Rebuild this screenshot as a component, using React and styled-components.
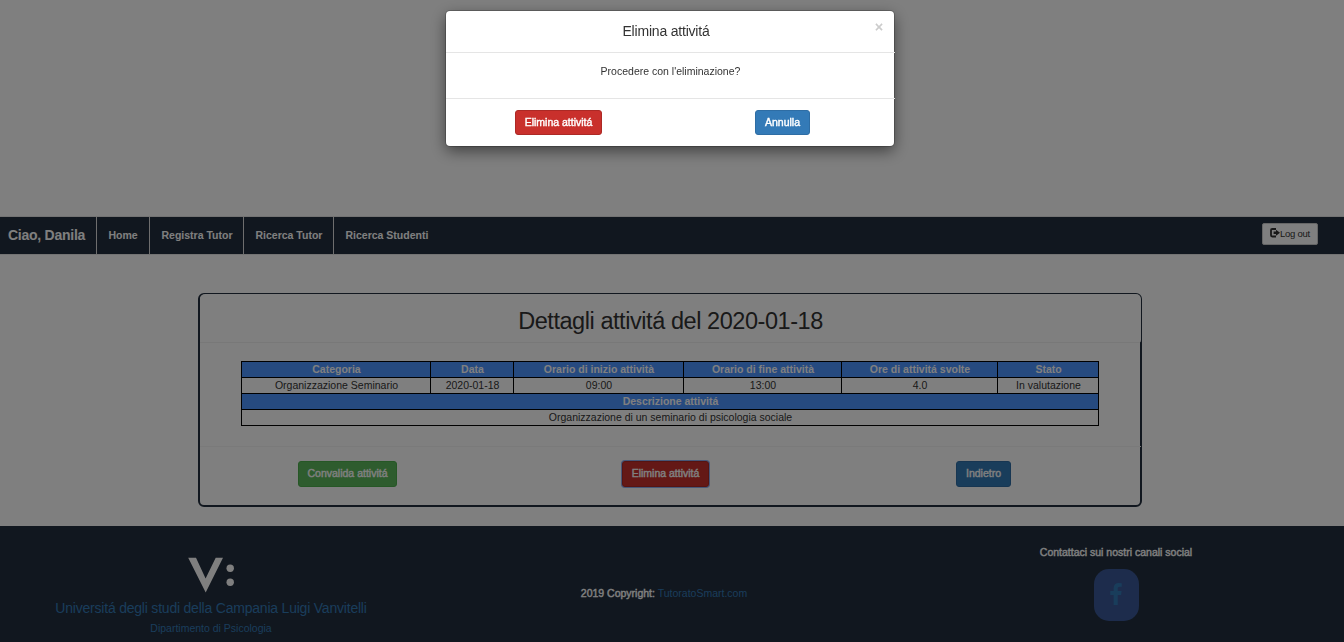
import React from 'react';
import styled, { createGlobalStyle } from 'styled-components';

const GlobalStyle = createGlobalStyle`
  * { box-sizing: border-box; }
  body {
    margin: 0;
    background: #fff;
    color: #333;
    font: 10.5px/16px "Liberation Sans", Arial, sans-serif;
    overflow: hidden;
  }
`;

const Page = styled.div`
  display: flex;
  flex-direction: column;
  width: 1344px;
  height: 642px;
  padding-top: 216px;
  overflow: hidden;
`;

const Strong = styled.span`
  -webkit-text-stroke: 0.4px currentColor;
  white-space: nowrap;
`;

const Navbar = styled.nav`
  display: flex;
  height: 39px;
  flex: none;
  border: 1px solid #e7e7e7;
  border-width: 1px 0;
  background: #232f3e;
  color: #fff;
  font-weight: bold;
`;

const NavItem = styled.div`
  width: ${p => p.$width}px;
  height: 37px;
  line-height: 36px;
  padding-left: ${p => (p.$brand ? 8 : 11.5)}px;
  font-size: ${p => (p.$brand ? 14 : 10.5)}px;
  letter-spacing: ${p => (p.$brand ? '-0.25px' : 'normal')};
  white-space: nowrap;
  border-right: ${p => (p.$last ? 0 : 1)}px solid #ddd;
`;

const Logout = styled.button`
  display: flex;
  align-items: center;
  width: 56px;
  height: 22px;
  margin: 6px 26px 0 auto;
  padding: 0 0 2px 7px;
  border: 1px solid #ccc;
  border-radius: 2px;
  background: #fff;
  color: #333;
  font: 9.5px "Liberation Sans", Arial, sans-serif;
  letter-spacing: -0.25px;
  white-space: nowrap;
`;

const Card = styled.section`
  display: flex;
  flex-direction: column;
  flex: none;
  width: 944px;
  height: 214px;
  margin: 38px 0 0 198px;
  border: 2px solid #232f3e;
  border-radius: 6px;
`;

const CardHeader = styled.h2`
  flex: none;
  height: 49px;
  margin: -1px -1px 0 0;
  padding-right: 0;
  border-bottom: 1px solid #f0f0f0;
  border-radius: 5px 5px 3px 0;
  background: #fff;
  font-size: 23.5px;
  font-weight: normal;
  letter-spacing: -0.44px;
  line-height: 54px;
  text-align: center;
`;

const Table = styled.table`
  width: 858px;
  margin: 18px 0 0 41px;
  table-layout: fixed;
  border-collapse: collapse;
  text-align: center;
`;

const Row = styled.tr`
  height: 16px;
`;

const HeadCell = styled.th`
  padding: 0 0 0 1px;
  border: 1px solid #000;
  background: #4d94ff;
  color: #fff;
  line-height: 15px;
`;

const Cell = styled.td`
  padding: 0 0 0 1px;
  border: 1px solid #000;
  line-height: 15px;
`;

const CardFooter = styled.div`
  display: grid;
  grid-template-columns: 324px 334px auto;
  margin: 20px -1px 0 0;
  padding: 14px 0 0 98px;
  border-top: 1px solid #f5f5f5;
`;

const tones = {
  success: ['#5cb85c', '#4cae4c'],
  danger: ['#c9302c', '#ac2925'],
  primary: ['#337ab7', '#2e6da4'],
};

const Button = styled.button`
  width: ${p => p.$width}px;
  height: ${p => p.$height || 26}px;
  padding: 0 0 ${p => (p.$height ? 1 : 2)}px;
  border: 1px solid ${p => tones[p.$tone][1]};
  border-radius: 3px;
  background: ${p => tones[p.$tone][0]};
  color: #fff;
  font: 10.5px/16px "Liberation Sans", Arial, sans-serif;
  white-space: nowrap;
  box-shadow: ${p => (p.$focused ? '0 0 0 1px #8fadee' : 'none')};
`;

const Footer = styled.footer`
  display: grid;
  grid-template-columns: 422px 484px 1fr;
  flex: 1;
  margin-top: 19px;
  background: #232f3e;
  color: #fff;
  text-align: center;
`;

const University = styled.div`
  display: flex;
  flex-direction: column;
  align-items: center;
  color: #337ab7;
`;

const Mark = styled.svg`
  width: 48px;
  height: 36px;
  margin-top: 31px;
`;

const UniversityName = styled.div`
  margin-top: 6px;
  font-size: 14px;
  letter-spacing: -0.21px;
  line-height: 18px;
`;

const Department = styled.div`
  margin-top: 3px;
`;

const Copyright = styled.div`
  margin-top: 59px;
`;

const Link = styled.a`
  color: #337ab7;
`;

const Social = styled.div`
  display: flex;
  flex-direction: column;
  align-items: center;
  width: 420px;
  padding-top: 18px;
`;

const SocialButton = styled.a`
  display: flex;
  align-items: center;
  justify-content: center;
  width: 45px;
  height: 52px;
  margin-top: 9px;
  padding-bottom: 3px;
  border-radius: 15px;
  background: #3b5998;
  color: #337ab7;
`;

const Backdrop = styled.div`
  position: fixed;
  inset: 0;
  padding: 11px 0 0 446px;
  background: rgba(0, 0, 0, 0.5);
`;

const Modal = styled.div`
  width: 448px;
  height: 135px;
  border-radius: 4px;
  background: #fff;
  box-shadow: 0 0 0 1px rgba(0, 0, 0, 0.2), 0 5px 15px rgba(0, 0, 0, 0.5);
`;

const ModalHeader = styled.div`
  display: grid;
  grid-template-columns: 30px 1fr 31px;
  height: 42px;
  margin-right: -1px;
  border-bottom: 1px solid #e5e5e5;
  text-align: center;
  font-size: 14px;
  line-height: 40px;
`;

const Title = styled.span`
  grid-column: 2;
  margin-right: 8px;
  letter-spacing: -0.2px;
`;

const Close = styled.span`
  padding-right: 1px;
  color: #ccc;
  font-size: 14.5px;
  font-weight: bold;
  line-height: 32px;
`;

const ModalBody = styled.div`
  height: 46px;
  margin-right: -1px;
  padding-top: 10px;
  border-bottom: 1px solid #e5e5e5;
  text-align: center;
`;

const ModalFooter = styled.div`
  display: flex;
  justify-content: space-between;
  padding: 11px 84px 0 69px;
`;

const LogoutIcon = () => (
  <svg width="10" height="10" viewBox="0 0 10 10">
    <path d="M6 1H2.2Q1 1 1 2.2V7.3Q1 8.5 2.2 8.5H6" fill="none" stroke="#333" strokeWidth="1.8" />
    <path d="M3.6 3.6H6V1.8L10 4.8 6 7.8V6H3.6Z" fill="#333" />
  </svg>
);

const FacebookIcon = () => (
  <svg width="12" height="22" viewBox="479 0 864 1664" fill="currentColor">
    <path d="M1343 12v264h-157q-86 0-116 36t-30 108v189h293l-39 296h-254v759h-306v-759h-255v-296h255v-218q0-186 104-288.5t277-102.5q147 0 228 12z" />
  </svg>
);

export default function App() {
  return (
    <>
      <GlobalStyle />
      <Page>
        <Navbar>
          <NavItem $width={97} $brand>Ciao, Danila</NavItem>
          <NavItem $width={53}>Home</NavItem>
          <NavItem $width={94}>Registra Tutor</NavItem>
          <NavItem $width={90}>Ricerca Tutor</NavItem>
          <NavItem $width={120} $last>Ricerca Studenti</NavItem>
          <Logout><LogoutIcon />Log out</Logout>
        </Navbar>
        <Card>
          <CardHeader>Dettagli attivitá del 2020-01-18</CardHeader>
          <Table>
            <colgroup>
              {[189, 83, 170, 158, 156, 101].map((w, i) => <col key={i} width={w} />)}
            </colgroup>
            <tbody>
              <Row>
                <HeadCell>Categoria</HeadCell>
                <HeadCell>Data</HeadCell>
                <HeadCell>Orario di inizio attività</HeadCell>
                <HeadCell>Orario di fine attività</HeadCell>
                <HeadCell>Ore di attivitá svolte</HeadCell>
                <HeadCell>Stato</HeadCell>
              </Row>
              <Row>
                <Cell>Organizzazione Seminario</Cell>
                <Cell>2020-01-18</Cell>
                <Cell>09:00</Cell>
                <Cell>13:00</Cell>
                <Cell>4.0</Cell>
                <Cell>In valutazione</Cell>
              </Row>
              <Row><HeadCell colSpan={6}>Descrizione attivitá</HeadCell></Row>
              <Row><Cell colSpan={6}>Organizzazione di un seminario di psicologia sociale</Cell></Row>
            </tbody>
          </Table>
          <CardFooter>
            <Button $tone="success" $width={99}><Strong>Convalida attivitá</Strong></Button>
            <Button $tone="danger" $width={87} $focused><Strong>Elimina attivitá</Strong></Button>
            <Button $tone="primary" $width={55}><Strong>Indietro</Strong></Button>
          </CardFooter>
        </Card>
        <Footer>
          <University>
            <Mark viewBox="0 0 48 36">
              <path d="M1.2 0.8H9L18.6 21.5 28.7 0.8H36L18.7 35.5Z" fill="#fff" />
              <circle cx="43.2" cy="11.3" r="3.7" fill="#fff" />
              <circle cx="43.2" cy="25.3" r="3.7" fill="#fff" />
            </Mark>
            <UniversityName>Universitá degli studi della Campania Luigi Vanvitelli</UniversityName>
            <Department>Dipartimento di Psicologia</Department>
          </University>
          <Copyright><Strong>2019 Copyright:</Strong> <Link>TutoratoSmart.com</Link></Copyright>
          <Social>
            <Strong>Contattaci sui nostri canali social</Strong>
            <SocialButton><FacebookIcon /></SocialButton>
          </Social>
        </Footer>
      </Page>
      <Backdrop>
        <Modal>
          <ModalHeader>
            <Title>Elimina attivitá</Title>
            <Close>×</Close>
          </ModalHeader>
          <ModalBody>Procedere con l'eliminazione?</ModalBody>
          <ModalFooter>
            <Button $tone="danger" $width={87} $height={25}><Strong>Elimina attivitá</Strong></Button>
            <Button $tone="primary" $width={55} $height={25}><Strong>Annulla</Strong></Button>
          </ModalFooter>
        </Modal>
      </Backdrop>
    </>
  );
}
